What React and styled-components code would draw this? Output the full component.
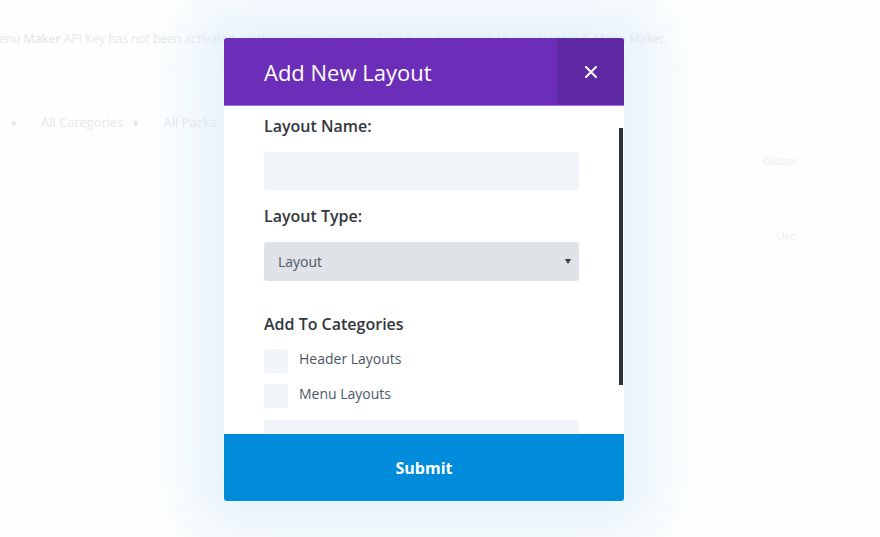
import styled, { createGlobalStyle } from "styled-components";

const GlobalStyle = createGlobalStyle`
  html, body {
    margin: 0;
    padding: 0;
    background: #fdfefe;
    font-family: "Open Sans", "Noto Sans", sans-serif;
  }
`;

const categories = ["Header Layouts", "Menu Layouts"];

const App = () => {
  return (
    <Page>
      <GlobalStyle />
      <Backdrop>
        <Notice>
          enu <b>Maker</b> API Key has not been activated, so the plugin is inactive! Click here to activate Mighty Header &amp; Menu Maker.
        </Notice>
        <Filters>
          <Caret>▾</Caret>
          <FilterItem>All Categories</FilterItem>
          <Caret>▾</Caret>
          <FilterItem>All Packs</FilterItem>
          <Caret>▾</Caret>
        </Filters>
        <SideText $top={22}>Global</SideText>
        <SideText $top={60}>Use</SideText>
      </Backdrop>

      <Modal>
        <Header>
          <Title>Add New Layout</Title>
          <CloseButton aria-label="close">
            <svg width="12" height="12" viewBox="0 0 12 12">
              <path d="M1 1 L11 11 M11 1 L1 11" stroke="#fff" strokeWidth="2" strokeLinecap="round" />
            </svg>
          </CloseButton>
        </Header>

        <Body>
          <Label>Layout Name:</Label>
          <Input />
          <Label $gap={16}>Layout Type:</Label>
          <Select>
            <span>Layout</span>
            <Arrow />
          </Select>
          <Label $gap={33}>Add To Categories</Label>
          <CheckList>
            {categories.map((name) => (
              <CheckRow key={name}>
                <CheckBox />
                <CheckLabel>{name}</CheckLabel>
              </CheckRow>
            ))}
          </CheckList>
          <Input $gap={12} />
          <ScrollThumb />
        </Body>

        <SubmitButton>Submit</SubmitButton>
      </Modal>
    </Page>
  );
};

export default App;

const Page = styled.div`
  position: relative;
  width: 880px;
  height: 537px;
  overflow: hidden;
  background: #fdfefe;
`;

const Backdrop = styled.div`
  display: flex;
  flex-direction: column;
  padding-top: 30px;
  color: #e6e8ea;
  font-size: 12px;
`;

const Notice = styled.div`
  margin-left: -1px;
  line-height: 18px;
  white-space: nowrap;

  b {
    font-weight: 600;
  }
`;

const Filters = styled.div`
  display: flex;
  align-items: center;
  column-gap: 10px;
  margin-top: 65px;
  padding-left: 11px;
  font-size: 13px;
`;

const Caret = styled.span`
  margin-right: 14px;
  font-size: 11px;
`;

const FilterItem = styled.span``;

const SideText = styled.div`
  align-self: flex-end;
  margin-top: ${(p) => p.$top}px;
  margin-right: 84px;
  font-size: 11px;
  color: #eceef0;
`;

const Modal = styled.div`
  position: absolute;
  left: 224px;
  top: 38px;
  display: flex;
  flex-direction: column;
  width: 400px;
  border-radius: 3px;
  overflow: hidden;
  box-shadow: 0 0 60px 26px rgba(205, 232, 245, 0.55);
`;

const Header = styled.div`
  display: flex;
  align-items: stretch;
  height: 67px;
  border-bottom: 1px solid #a76fe0;
  background: #6c2eb9;
`;

const Title = styled.h2`
  flex: 1;
  display: flex;
  align-items: center;
  margin: 0;
  padding-left: 40px;
  color: #ffffff;
  font-size: 22px;
  font-weight: 400;
`;

const CloseButton = styled.button`
  display: flex;
  justify-content: center;
  align-items: center;
  width: 67px;
  padding: 0;
  border: none;
  background: #5f29a4;
  cursor: pointer;
`;

const Body = styled.div`
  position: relative;
  display: flex;
  flex-direction: column;
  height: 328px;
  padding: 10px 45px 0 40px;
  overflow: hidden;
  background: #ffffff;
  box-sizing: border-box;
`;

const Label = styled.div`
  margin-top: ${(p) => p.$gap || 0}px;
  color: #32373c;
  font-size: 16px;
  font-weight: 600;
  line-height: 20px;
`;

const Input = styled.div`
  flex-shrink: 0;
  height: 38px;
  margin-top: ${(p) => p.$gap || 16}px;
  border-radius: 3px;
  background: #f1f5f9;
`;

const Select = styled.div`
  flex-shrink: 0;
  display: flex;
  justify-content: space-between;
  align-items: center;
  height: 39px;
  margin-top: 16px;
  padding: 0 8px 0 14px;
  border-radius: 3px;
  background: #dfe3e8;
  color: #4c5866;
  font-size: 14px;
`;

const Arrow = styled.span`
  width: 0;
  height: 0;
  border-left: 3px solid transparent;
  border-right: 3px solid transparent;
  border-top: 5px solid #32373c;
`;

const CheckList = styled.div`
  display: flex;
  flex-direction: column;
  row-gap: 11px;
  margin-top: 15px;
`;

const CheckRow = styled.div`
  display: flex;
  align-items: center;
  column-gap: 11px;
`;

const CheckBox = styled.span`
  width: 24px;
  height: 24px;
  border-radius: 3px;
  background: #f1f5f9;
`;

const CheckLabel = styled.span`
  margin-top: -6px;
  color: #4c5866;
  font-size: 14px;
`;

const ScrollThumb = styled.div`
  position: absolute;
  right: 1px;
  top: 22px;
  width: 4px;
  height: 257px;
  background: #2d3338;
`;

const SubmitButton = styled.button`
  height: 67px;
  border: none;
  background: #008bdb;
  color: #ffffff;
  font-family: "Open Sans", sans-serif;
  font-size: 16px;
  font-weight: 700;
  cursor: pointer;
`;
